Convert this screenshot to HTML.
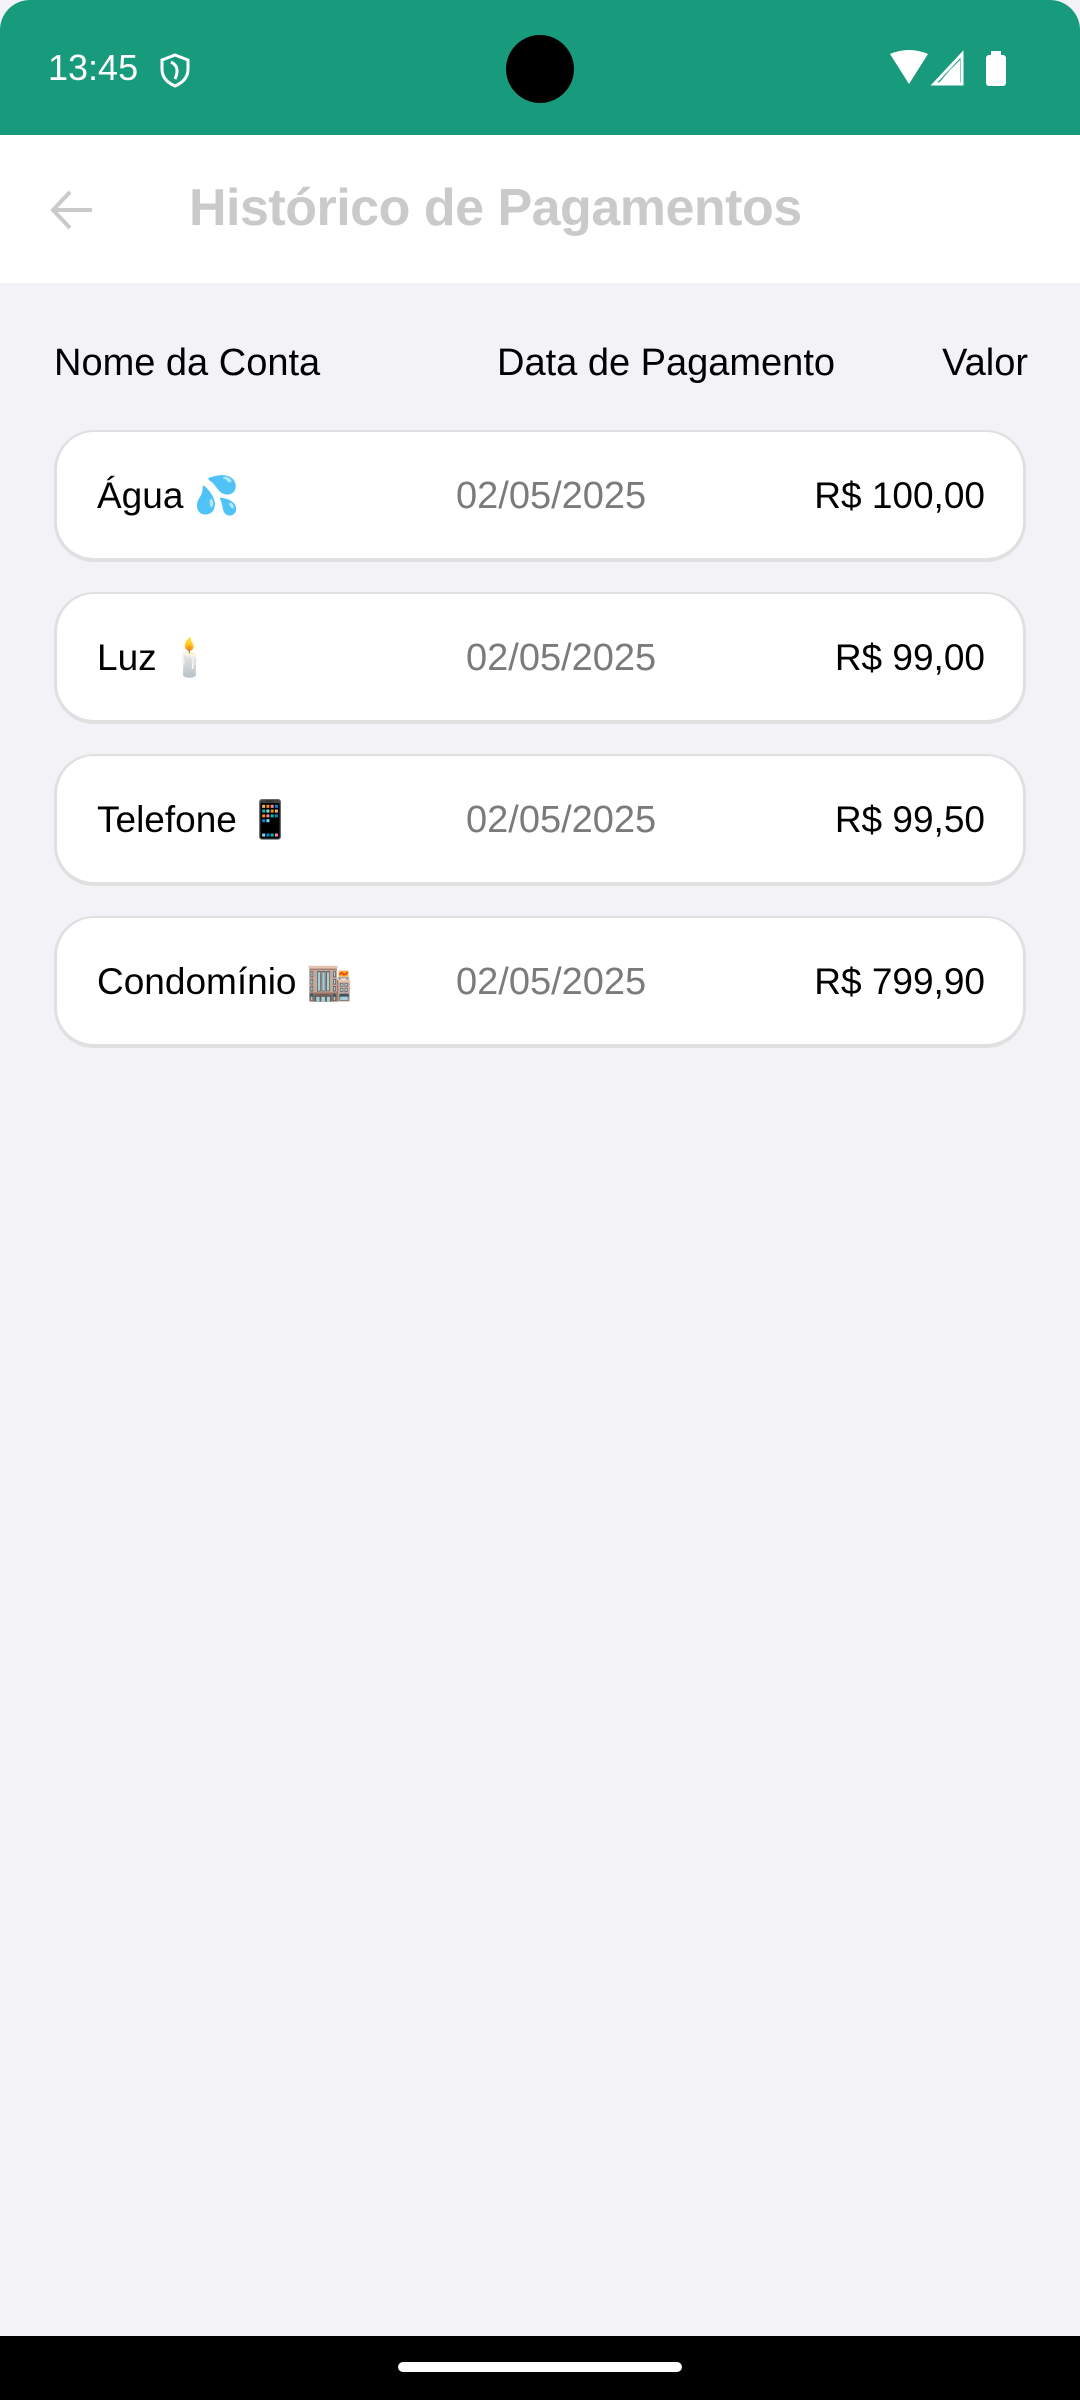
<!DOCTYPE html>
<html><head><meta charset="utf-8"><style>
*{margin:0;padding:0;box-sizing:border-box}
body{width:1080px;height:2400px;background:#f2f2f7;font-family:"Liberation Sans","Noto Sans CJK SC",sans-serif;position:relative;overflow:hidden}
.status{position:absolute;left:0;top:0;width:1080px;height:135px;background:#189a7c;border-radius:30px 30px 0 0}
.time{position:absolute;left:48px;top:47px;font-size:36px;color:#fff}
.cam{position:absolute;left:506px;top:35px;width:68px;height:68px;border-radius:50%;background:#000}
.appbar{position:absolute;left:0;top:135px;width:1080px;height:148px;background:#fff}
.title{position:absolute;left:189px;top:178px;font-size:52px;color:#cacaca;font-weight:bold;letter-spacing:-0.5px}
.hdr{position:absolute;top:342px;font-size:38px;color:#000}
.card{position:absolute;left:54px;width:972px;height:132px;background:#fff;border-radius:40px;border:3px solid #e0e0e0;border-top-width:2px;border-bottom-width:4px}
.card span{position:absolute;top:43px;font-size:37px}
.n{left:40px;color:#000}
.card span.d{color:#7b7b7b;font-size:38px}
.v{right:38px;color:#000}
.nav{position:absolute;left:0;top:2336px;width:1080px;height:64px;background:#000}
.handle{position:absolute;left:398px;top:2362px;width:284px;height:10px;border-radius:5px;background:#fff}
</style></head><body>
<div class="status">
<div class="time">13:45</div>
<svg style="position:absolute;left:158px;top:52px" width="34" height="36" viewBox="0 0 34 36"><path d="M17 3 L30 8 V17 C30 26 24 31 17 34 C10 31 4 26 4 17 V8 Z" fill="none" stroke="#fff" stroke-width="3"/><path d="M13 10 C19 13 21 18 17 27" fill="none" stroke="#fff" stroke-width="3"/></svg>
<div class="cam"></div>
<svg style="position:absolute;left:890px;top:50px" width="120" height="36" viewBox="0 0 120 36"><path d="M0 4 Q19 -4 38 4 L19 34 Z" fill="#fff"/><path d="M44 34 L72 4 V34 Z" fill="none" stroke="#fff" stroke-width="3"/><path d="M60 20 L70 10 V34 H48 Z" fill="#fff"/><rect x="96" y="5" width="20" height="31" rx="3" fill="#fff"/><rect x="101" y="1" width="10" height="5" fill="#fff"/></svg>
</div>
<div class="appbar">
<svg style="position:absolute;left:48px;top:52px" width="46" height="46" viewBox="0 0 46 46"><path d="M44 23 H6 M22 5 L5 23 L22 41" fill="none" stroke="#cacaca" stroke-width="4"/></svg>
</div>
<div class="title">Histórico de Pagamentos</div>
<div class="hdr" style="left:54px">Nome da Conta</div>
<div class="hdr" style="left:497px">Data de Pagamento</div>
<div class="hdr" style="right:52px">Valor</div>
<div class="card" style="top:430px"><span class="n">Água 💦</span><span class="d" style="left:399px">02/05/2025</span><span class="v">R$ 100,00</span></div>
<div class="card" style="top:592px"><span class="n">Luz 🕯️</span><span class="d" style="left:409px">02/05/2025</span><span class="v">R$ 99,00</span></div>
<div class="card" style="top:754px"><span class="n">Telefone 📱</span><span class="d" style="left:409px">02/05/2025</span><span class="v">R$ 99,50</span></div>
<div class="card" style="top:916px"><span class="n">Condomínio 🏬</span><span class="d" style="left:399px">02/05/2025</span><span class="v">R$ 799,90</span></div>
<div class="nav"></div><div class="handle"></div>
</body></html>
